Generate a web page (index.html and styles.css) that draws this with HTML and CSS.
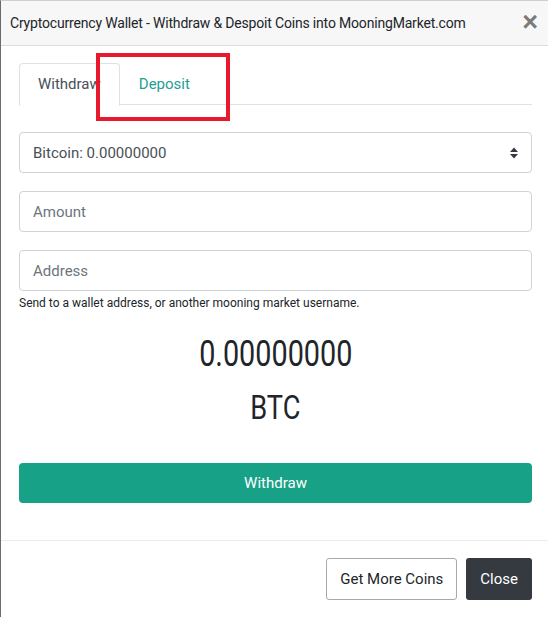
FILE: index.html
```html
<!DOCTYPE html>
<html>
<head>
<meta charset="utf-8">
<link rel="stylesheet" href="styles.css">
</head>
<body>
<div class="modal">
  <div class="modal-header">
    <div class="modal-title">Cryptocurrency Wallet - Withdraw &amp; Despoit Coins into MooningMarket.com</div>
    <div class="close">&times;</div>
  </div>
  <div class="modal-body">
    <div class="tabs">
      <div class="tab active">Withdraw</div>
      <div class="tab link">Deposit</div>
    </div>
    <div class="select">
      <span>Bitcoin: 0.00000000</span>
      <svg class="arrows" width="10" height="14" viewBox="0 0 10 14"><path d="M1 6 L5 1.5 L9 6 Z M1 8 L5 12.5 L9 8 Z" fill="#343a40"/></svg>
    </div>
    <div class="input">Amount</div>
    <div class="input">Address</div>
    <div class="help">Send to a wallet address, or another mooning market username.</div>
    <div class="amount"><span>0.00000000</span></div>
    <div class="unit"><span>BTC</span></div>
    <div class="btn-primary">Withdraw</div>
  </div>
  <div class="modal-footer">
    <div class="btn-outline">Get More Coins</div>
    <div class="btn-dark">Close</div>
  </div>
  <div class="highlight"></div>
</div>
</body>
</html>
```
FILE: styles.css
```css
html, body { margin: 0; padding: 0; background: #fff; }
body { font-family: Roboto, "Liberation Sans", sans-serif; color: #212529; }
.modal {
  position: relative;
  width: 548px;
  height: 617px;
  box-sizing: border-box;
  border-left: 1px solid #6b6b6b;
  border-top: 1px solid #cfcfcf;
  background: #fff;
  overflow: hidden;
}
.modal-header {
  height: 44px;
  background: #f7f7f7;
  border-bottom: 1px solid #dcdcdc;
  display: flex;
  align-items: center;
  justify-content: space-between;
  padding: 0 10px 0 9px;
}
.modal-title { font-size: 14px; color: #212529; letter-spacing: -0.18px; }
.close { font-size: 27px; font-weight: 700; color: #7a7a7a; line-height: 1; margin-top: -2px; font-family: "Liberation Sans", Arial, sans-serif; }
.modal-body { padding: 17px 16px 37px 18px; }
.tabs {
  display: flex;
  border-bottom: 1px solid #dee2e6;
  height: 41px;
}
.tab {
  padding: 0 18px;
  font-size: 15px;
  line-height: 41px;
  margin-bottom: -1px;
  border: 1px solid transparent;
  border-top-left-radius: 4px;
  border-top-right-radius: 4px;
  height: 40px;
}
.tab.active { color: #495057; border-color: #dee2e6 #dee2e6 #fff; background: #fff; height: 41px; line-height: 40px; }
.tab.link { color: #1f9e94; }
.select, .input {
  height: 39px;
  border: 1px solid #ced4da;
  border-radius: 4px;
  display: flex;
  align-items: center;
  padding: 0 13px;
  font-size: 15px;
  color: #495057;
}
.select { margin-top: 27px; justify-content: space-between; color: #495057; }
.arrows { margin-right: -1px; }
.input { margin-top: 18px; color: #6c757d; }
.help { font-size: 12px; margin-top: 5px; color: #212529; }
.amount, .unit { text-align: center; font-weight: 400; color: #212529; }
.amount span, .unit span { display: inline-block; transform: scaleX(0.8); }
.amount { font-size: 36px; margin-top: 23px; line-height: 42px; }
.unit { font-size: 34px; margin-top: 12px; line-height: 40px; }
.btn-primary {
  margin-top: 36px;
  height: 40px;
  background: #17a287;
  color: #fff;
  border-radius: 4px;
  display: flex;
  align-items: center;
  justify-content: center;
  font-size: 15px;
}
.modal-footer {
  border-top: 1px solid #e9ecef;
  display: flex;
  justify-content: flex-end;
  gap: 9px;
  padding: 17px 16px 0 0;
}
.btn-outline, .btn-dark {
  height: 42px;
  box-sizing: border-box;
  border-radius: 3px;
  display: flex;
  align-items: center;
  font-size: 15px;
}
.btn-outline { border: 1px solid #a9a9a9; color: #212529; padding: 0 13px; }
.btn-dark { background: #343a40; color: #fff; padding: 0 14px; }
.highlight {
  position: absolute;
  left: 95px;
  top: 52px;
  width: 126px;
  height: 60px;
  border: 4px solid #e8192c;
}
```
